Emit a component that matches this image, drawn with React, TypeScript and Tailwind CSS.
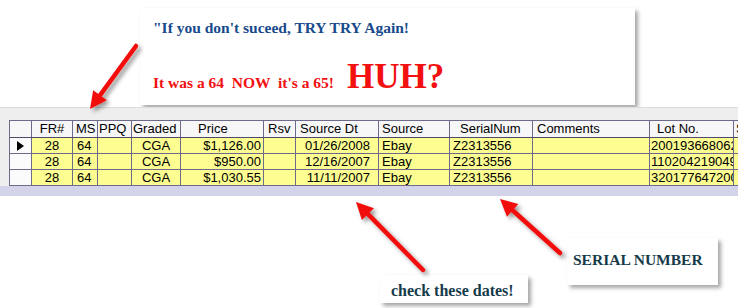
import React from "react";

const cols = [
  { w: "w-[22px]", head: "", headCls: "", cellCls: "" },
  { w: "w-[41px]", head: "FR#", headCls: "justify-center", cellCls: "justify-center" },
  { w: "w-[25px]", head: "MS", headCls: "pl-[3px]", cellCls: "pl-[4px]" },
  { w: "w-[34px]", head: "PPQ", headCls: "pl-[1px]", cellCls: "" },
  { w: "w-[49px]", head: "Graded", headCls: "pl-[1px]", cellCls: "justify-center" },
  { w: "w-[83px]", head: "Price", headCls: "pl-[17px]", cellCls: "justify-end pr-[2px]" },
  { w: "w-[32px]", head: "Rsv", headCls: "pl-[4px]", cellCls: "" },
  { w: "w-[83px]", head: "Source Dt", headCls: "pl-[4px]", cellCls: "justify-end pr-[8px]" },
  { w: "w-[71px]", head: "Source", headCls: "pl-[3px]", cellCls: "pl-[3px]" },
  { w: "w-[83px]", head: "SerialNum", headCls: "pl-[10px]", cellCls: "pl-[3px]" },
  { w: "w-[117px]", head: "Comments", headCls: "pl-[4px]", cellCls: "" },
  { w: "w-[84px]", head: "Lot No.", headCls: "pl-[7px]", cellCls: "pl-[1px]" },
  { w: "w-[40px]", head: "Sold", headCls: "pl-[2px]", cellCls: "" },
];

const rows = [
  ["", "28", "64", "", "CGA", "$1,126.00", "", "01/26/2008", "Ebay", "Z2313556", "", "200193668062", ""],
  ["", "28", "64", "", "CGA", "$950.00", "", "12/16/2007", "Ebay", "Z2313556", "", "110204219049", ""],
  ["", "28", "64", "", "CGA", "$1,030.55", "", "11/11/2007", "Ebay", "Z2313556", "", "320177647200", ""],
];

function Arrow({ x1, y1, x2, y2 }: { x1: number; y1: number; x2: number; y2: number }) {
  const dx = x2 - x1;
  const dy = y2 - y1;
  const len = Math.hypot(dx, dy);
  const ux = dx / len;
  const uy = dy / len;
  const hl = 17;
  const hw = 8.5;
  const bx = x2 - ux * hl;
  const by = y2 - uy * hl;
  const px = -uy;
  const py = ux;
  return (
    <g filter="url(#ds)">
      <line x1={x1} y1={y1} x2={bx + ux * 2} y2={by + uy * 2} stroke="#f20d0d" strokeWidth={4.5} strokeLinecap="round" />
      <polygon
        points={`${x2},${y2} ${bx + px * hw},${by + py * hw} ${bx - px * hw},${by - py * hw}`}
        fill="#f20d0d"
      />
    </g>
  );
}

export default function App() {
  return (
    <div className="relative w-[738px] h-[308px] bg-white overflow-hidden">
      {/* callout */}
      <div className="h-[107px] pt-[8px] pl-[140px]">
        <div className="w-[495px] h-[97px] bg-white shadow-[3px_3px_4px_rgba(0,0,0,0.35)] pl-[13px] pt-[12px] font-['Liberation_Serif','Times_New_Roman',serif] font-bold">
          <p className="text-[15.5px] leading-none text-[#184a8c] whitespace-nowrap">"If you don't suceed, TRY TRY Again!</p>
          <div className="mt-[23px] flex items-baseline leading-none text-[#f21010] whitespace-pre">
            <span className="text-[15.5px]">It was a 64  NOW  it's a 65!</span>
            <span className="ml-[13px] text-[35px]">HUH?</span>
          </div>
        </div>
      </div>

      {/* grid */}
      <div className="h-[13px] bg-[#eeeeee] border-t border-[#dcdcdc]" />
      <div className="bg-[#eeeeee] pl-[9px] font-['Liberation_Sans',Arial,sans-serif] text-[13px] text-black">
        <div className="border-t border-l border-[#6d6a8c] overflow-hidden">
          <div className="flex h-[17px] bg-[#f7f7f7] border-b border-[#4e4b6a]">
            {cols.map((c, i) => (
              <div
                key={i}
                className={`flex items-center shrink-0 overflow-hidden whitespace-nowrap border-r border-[#6d6a8c] ${c.w} ${c.headCls}`}
              >
                {c.head}
              </div>
            ))}
          </div>
          {rows.map((r, ri) => (
            <div key={ri} className="flex h-[16px] border-b border-[#6d6a8c]">
              {cols.map((c, i) =>
                i === 0 ? (
                  <div key={i} className={`flex items-center shrink-0 bg-[#fbfbfb] border-r border-[#6d6a8c] pl-[7px] ${c.w}`}>
                    {ri === 0 && (
                      <svg width="7" height="10" viewBox="0 0 7 10">
                        <polygon points="0,0 7,5 0,10" fill="#000" />
                      </svg>
                    )}
                  </div>
                ) : (
                  <div
                    key={i}
                    className={`flex items-center shrink-0 overflow-hidden whitespace-nowrap bg-[#fdfd92] border-r border-[#6d6a8c] ${c.w} ${c.cellCls}`}
                  >
                    {r[i]}
                  </div>
                )
              )}
            </div>
          ))}
        </div>
      </div>
      <div className="h-[10px] bg-[#d3d3ea]" />

      {/* bottom notes */}
      <div className="flex items-start pl-[380px] font-['Liberation_Serif','Times_New_Roman',serif] font-bold text-[#163a4a] leading-none">
        <div className="mt-[79px] w-[148px] h-[28px] bg-white shadow-[3px_3px_4px_rgba(0,0,0,0.35)] pl-[11px] pt-[8px] text-[16px] whitespace-nowrap">
          check these dates!
        </div>
        <div className="mt-[42px] ml-[39px] w-[151px] h-[47px] bg-white shadow-[3px_3px_4px_rgba(0,0,0,0.35)] pl-[6px] pt-[14px] text-[15.5px] whitespace-nowrap">
          SERIAL NUMBER
        </div>
      </div>

      {/* arrows */}
      <svg className="absolute inset-0 w-full h-full pointer-events-none" viewBox="0 0 738 308">
        <defs>
          <filter id="ds" x="-20%" y="-20%" width="140%" height="140%">
            <feDropShadow dx="3" dy="3" stdDeviation="2" floodColor="#000" floodOpacity="0.4" />
          </filter>
        </defs>
        <Arrow x1={136} y1={46} x2={90} y2={109} />
        <Arrow x1={423} y1={270} x2={356} y2={202} />
        <Arrow x1={560} y1={253} x2={500} y2={199} />
      </svg>
    </div>
  );
}
